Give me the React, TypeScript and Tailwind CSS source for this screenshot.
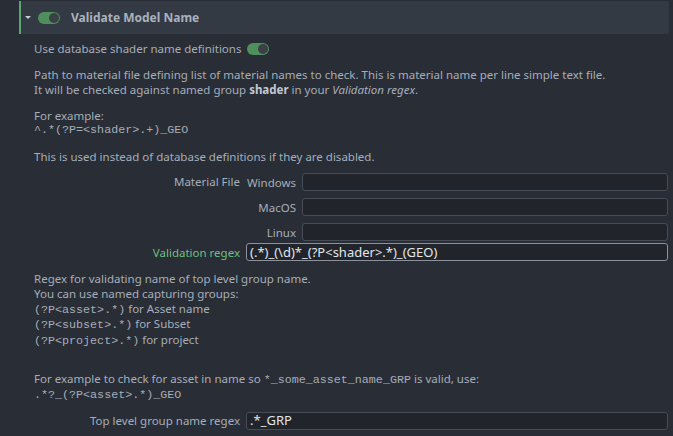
import React from "react";

const Toggle = () => (
  <div className="relative w-[22px] h-[12px] rounded-full bg-[#4f8f5e] shrink-0">
    <div className="absolute right-[1px] top-[1px] w-[10px] h-[10px] rounded-full bg-[#3b3f46]" />
  </div>
);

const Input = ({ value, active }: { value?: string; active?: boolean }) => (
  <div
    className={
      "flex-1 h-[18px] rounded-[3px] bg-[#21252b] border flex items-center px-[3px] text-[13px] text-[#e2e5ea] " +
      (active ? "border-[#8b929c]" : "border-[#464c56]")
    }
  >
    {value}
  </div>
);

const mono = { fontFamily: '"Liberation Mono", monospace' };

export default function App() {
  return (
    <div
      className="w-[673px] h-[436px] bg-[#292d36] overflow-hidden text-[#a6aeb9]"
      style={{ fontFamily: '"Noto Sans", sans-serif' }}
    >
      <div className="pl-[19px] pr-[4px] pt-[1px]">
        <div className="flex items-center h-[33px] bg-[#343a44] border-l-[2px] border-[#5aa86e] rounded-r-[2px]">
          <div className="ml-[4px] w-0 h-0 border-l-[3px] border-r-[3px] border-t-[3px] border-l-transparent border-r-transparent border-t-[#c9ced6]" />
          <div className="ml-[7px]">
            <Toggle />
          </div>
          <div className="ml-[11px] text-[12px] font-bold text-[#a9b1bd]">Validate Model Name</div>
        </div>
      </div>

      <div className="pl-[34px] pr-[5px] text-[11.5px] leading-[15px]">
        <div className="mt-[7px] flex items-center gap-[6px] h-[15px]">
          <span>Use database shader name definitions</span>
          <Toggle />
        </div>

        <div className="mt-[11px]">
          <div>Path to material file defining list of material names to check. This is material name per line simple text file.</div>
          <div>
            It will be checked against named group <b className="text-[#c3c9d2]">shader</b> in your <i>Validation regex</i>.
          </div>
        </div>

        <div className="mt-[11px]">
          <div>For example:</div>
          <div className="text-[11.7px]" style={mono}>^.*(?P=&lt;shader&gt;.+)_GEO</div>
        </div>

        <div className="mt-[11px]">
          This is used instead of database definitions if they are disabled.
        </div>

        <div className="mt-[9px] flex flex-col gap-[2px]">
          <div className="flex items-start gap-[6px]">
            <div className="w-[206px] text-right h-[18px] leading-[18px]">Material File</div>
            <div className="flex-1 flex flex-col gap-[7px]">
              <div className="flex items-center gap-[6px]">
                <div className="w-[50px] text-right">Windows</div>
                <Input />
              </div>
              <div className="flex items-center gap-[6px]">
                <div className="w-[50px] text-right">MacOS</div>
                <Input />
              </div>
              <div className="flex items-center gap-[6px]">
                <div className="w-[50px] text-right">Linux</div>
                <Input />
              </div>
            </div>
          </div>
          <div className="flex items-center gap-[6px]">
            <div className="w-[206px] text-right text-[#6fbf80]">Validation regex</div>
            <Input value="(.*)_(\d)*_(?P<shader>.*)_(GEO)" active />
          </div>
        </div>

        <div className="mt-[11px] leading-[14.75px]">
          <div>Regex for validating name of top level group name.</div>
          <div>You can use named capturing groups:</div>
          <div>
            <span className="text-[11.7px]" style={mono}>(?P&lt;asset&gt;.*)</span> for Asset name
          </div>
          <div>
            <span className="text-[11.7px]" style={mono}>(?P&lt;subset&gt;.*)</span> for Subset
          </div>
          <div>
            <span className="text-[11.7px]" style={mono}>(?P&lt;project&gt;.*)</span> for project
          </div>
        </div>

        <div className="mt-[22px]">
          <div>
            For example to check for asset in name so{" "}
            <span className="text-[11.7px]" style={mono}>*_some_asset_name_GRP</span> is valid, use:
          </div>
          <div className="text-[11.7px]" style={mono}>.*?_(?P&lt;asset&gt;.*)_GEO</div>
        </div>

        <div className="mt-[9px] flex items-center gap-[6px]">
          <div className="w-[206px] text-right">Top level group name regex</div>
          <Input value=".*_GRP" />
        </div>
      </div>
    </div>
  );
}
